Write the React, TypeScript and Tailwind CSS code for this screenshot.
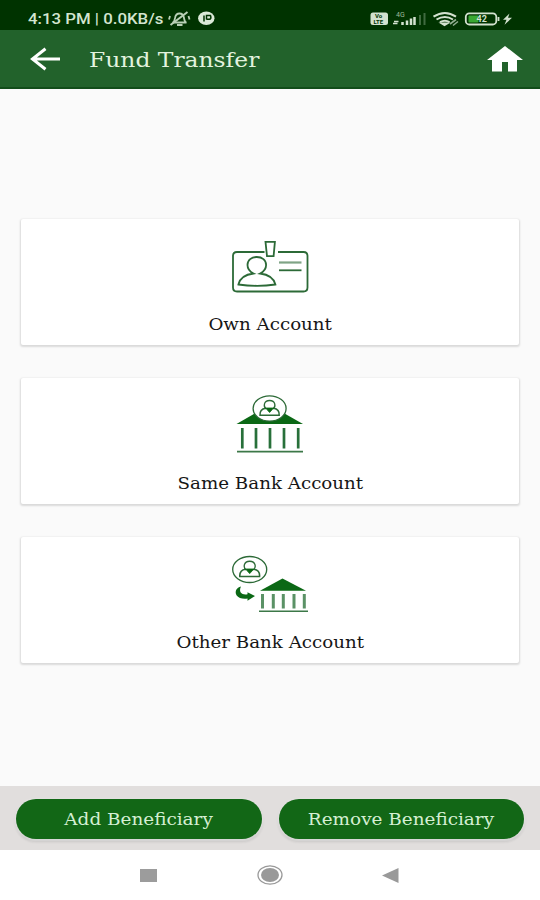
import type { ReactNode } from "react";

const serif = "font-['DejaVu_Serif',serif]";

function OwnAccountIcon() {
  return (
    <svg viewBox="230 236 80 60" className="h-[60px] w-20" fill="none" stroke="#2c6a37" strokeWidth="1.8">
      <path d="M264.500 252H237q-4 0-4 4v31.500q0 4 4 4h66.500q4 0 4-4V256q0-4-4-4H278" />
      <path d="M265.500 241.800h9.400l-1.300 14.400h-6.600z" />
      <path d="M253.500 273.500c-4-2-6-5-6-8.500 0-5 4-8 9.300-8s9.300 3 9.300 8c0 3.500-2 6.500-6 8.500 8 1 13.500 4 15.300 11q-18 2.600-37 0c1.500-6.500 7-10 15.100-11z" />
      <path d="M279 262.500h22.500" stroke="#7fa486" strokeWidth="2.200" />
      <path d="M279 270.300h22.500" />
    </svg>
  );
}

function Person() {
  return (
    <g fill="none" stroke="#2c6a37" strokeWidth="1.300">
      <ellipse cx="0" cy="0" rx="16.500" ry="12.600" fill="#fff" />
      <path d="M-3.500 .5C-6.500-2-6-8 0-8s6.500 6 3.500 8.500" />
      <path d="M-4-.3Q-10 .5-9.600 6.700H9.600Q10 .5 4-.3" strokeWidth="1.500" />
      <path d="M-4-.5h8L0 4z" fill="#0b6815" stroke="#0b6815" strokeWidth=".8" />
    </g>
  );
}

function SameBankIcon() {
  return (
    <svg viewBox="230 395 80 60" className="h-[60px] w-20">
      <path d="M236.500 424 269.500 405l33.500 19z" fill="#0b6815" />
      <path d="M242.300 428v20.500M256 428v20.500M270 428v20.500M284 428v20.500M298.200 428v20.500" stroke="#28703a" strokeWidth="2.700" />
      <path d="M237 451.600h66" stroke="#3c7848" strokeWidth="1.800" />
      <g transform="translate(269.600 408.500)">
        <Person />
      </g>
    </svg>
  );
}

function OtherBankIcon() {
  return (
    <svg viewBox="230 554 80 60" className="h-[60px] w-20">
      <g transform="translate(249.700 569.500) scale(1.03)">
        <Person />
      </g>
      <path d="M241 586.500c-4.500 1-6.500 5-4.500 8.700 2 3.200 7 4 11 3.300v2.200l7.500-4.700-7.500-3.800v2c-5 1-9.500-1.500-6.500-7.700z" fill="#0b6815" />
      <path d="M260 590.800 282.500 578.500l23.500 12.300z" fill="#0b6815" />
      <path d="M262.500 594v14.500M273.300 594v14.500M283.300 594v14.500M294 594v14.500M304.300 594v14.500" stroke="#5b9266" strokeWidth="3" />
      <path d="M259 611.300h49" stroke="#3c7848" strokeWidth="1.500" />
    </svg>
  );
}

function AccountCard({ icon, label }: { icon: ReactNode; label: string }) {
  return (
    <button
      type="button"
      className="flex h-[126px] w-full flex-col items-center rounded-[2px] bg-white pt-[17px] shadow-[0_1px_2px_1px_rgba(0,0,0,0.13)]"
    >
      {icon}
      <span className={`mt-[19px] scale-x-[1.14] text-[16px] leading-5 whitespace-nowrap text-[#161616] ${serif}`}>{label}</span>
    </button>
  );
}

function ActionButton({ label }: { label: string }) {
  return (
    <button
      type="button"
      className="flex h-10 flex-1 items-center justify-center rounded-full bg-[#126716] pt-px shadow-[0_1px_2px_1px_rgba(255,255,255,0.6),0_2px_3px_rgba(0,0,0,0.3)]"
    >
      <span className={`scale-x-[1.15] text-[16px] leading-5 whitespace-nowrap text-[#d5efd3] ${serif}`}>{label}</span>
    </button>
  );
}

function StatusBar() {
  return (
    <div className="flex h-[30px] items-center bg-[#003300] pt-[7px] pl-7">
      <span className="w-[140px] origin-left scale-x-[1.2] font-['Roboto',sans-serif] text-[14px] leading-5 font-medium whitespace-nowrap text-[#d3e5d0]">
        4:13 PM | 0.0KB/s
      </span>
      <svg viewBox="168 10 50 18" className="h-[18px] w-[50px]" fill="none" stroke="#b9d0b6" strokeWidth="1.800">
        <path d="M172.500 22.500c2-.5 2-2.500 2.500-4.500.5-3 2.500-4.500 4.500-4.500s4 1.500 4.500 4.500 .5 4 2.500 4.500zM177 25h5.500M169 19.500l1-3.500M188.500 16l1 3.500" />
        <path d="M170.500 25 187.500 12" strokeWidth="2" />
        <ellipse cx="206.300" cy="18.300" rx="8.200" ry="6.800" fill="#dbead8" stroke="none" />
        <path d="M204 21.500v-6M206.500 19.500v-4h4q1 2.500-.500 3.800h-3.500" stroke="#003300" strokeWidth="1.500" />
      </svg>
      <svg viewBox="368 10 146 18" className="ml-[150px] h-[18px] w-[146px]">
        <rect x="370.500" y="12.500" width="17.500" height="12.500" rx="2.500" fill="#d3e2cf" />
        <g className="font-['Roboto',sans-serif] text-[6px] font-bold" fill="#003300">
          <text x="375" y="18.300">Vo</text>
          <text x="373.500" y="24">LTE</text>
        </g>
        <text x="396" y="17" className="font-['Roboto',sans-serif] text-[7px]" fill="#9fba9c">4G</text>
        <path d="M394 21.500h4.500M393 23.500h4.500" stroke="#d3e2cf" strokeWidth="1.500" />
        <path d="M402.500 25v-3M407 25v-4.500M411 25v-6.500M414.500 25v-8" stroke="#d3e2cf" strokeWidth="2.500" />
        <path d="M420 25V15M424.500 25V13" stroke="#406b40" strokeWidth="2" />
        <g fill="none" stroke="#d3e2cf" strokeWidth="2">
          <path d="M433.500 16.700q11.500-7.500 22.500 0M436.500 19.500q8.500-5 16.500 0M440 22.200q5-3 9.500 0" />
          <path d="M442 23.500h5l-2.500 1.500z" />
          <path d="M450 24l6-4.500M453 25.500l5-4" stroke="#91ad90" strokeWidth="1.600" />
        </g>
        <rect x="465.800" y="13.300" width="30.500" height="11.200" rx="3.500" fill="none" stroke="#d3e2cf" strokeWidth="1.800" />
        <rect x="468.500" y="15.500" width="10" height="7" rx="1" fill="#39a832" />
        <path d="M498.500 17v4" stroke="#d3e2cf" strokeWidth="1.800" />
        <text x="476.500" y="22.300" className="font-['Roboto',sans-serif] text-[9px] font-bold" fill="#d3e2cf">42</text>
        <path d="M509.500 13.500 503 19.800h3.500l-2 5 7.500-7h-4z" fill="#d3e2cf" />
      </svg>
    </div>
  );
}

export default function App() {
  return (
    <div className="flex h-[900px] w-[540px] flex-col overflow-hidden bg-[#fafafa]">
      <StatusBar />
      <header className="flex h-[59px] items-center border-b-2 border-[#124d1a] bg-[#22622b] pr-[17px] pl-[30px]">
        <svg viewBox="0 0 31 24" className="h-6 w-[31px]" fill="none" stroke="#fff" strokeWidth="3">
          <path d="M30 12H2M15.500 1.800 2.500 12l13 10.200" />
        </svg>
        <h1 className={`mt-[3px] ml-7 w-[200px] origin-left scale-x-[1.17] text-[20px] leading-7 whitespace-nowrap text-[#e3f3df] ${serif}`}>
          Fund Transfer
        </h1>
        <svg viewBox="0 0 36 26" className="ml-auto h-[26px] w-9" fill="#fff">
          <path d="M18 0 0 14h5v11.500h10V16h6v9.500h9V14h6z" />
        </svg>
      </header>

      <main className="flex flex-1 flex-col gap-[33px] px-[21px] pt-[130px]">
        <AccountCard icon={<OwnAccountIcon />} label="Own Account" />
        <AccountCard icon={<SameBankIcon />} label="Same Bank Account" />
        <AccountCard icon={<OtherBankIcon />} label="Other Bank Account" />
      </main>

      <footer className="flex h-16 items-center gap-[17px] bg-[#e1dedd] px-4 pt-0.5">
        <ActionButton label="Add Beneficiary" />
        <ActionButton label="Remove Beneficiary" />
      </footer>
      <nav className="flex h-[50px] items-center justify-between bg-white pr-[141px] pl-[140px]">
        <div className="h-[13px] w-[17px] bg-[#9c9c9c]" />
        <svg viewBox="0 0 26 20" className="h-5 w-[26px]">
          <ellipse cx="13" cy="10" rx="12" ry="9.200" fill="none" stroke="#999" strokeWidth="1.300" />
          <ellipse cx="13" cy="10" rx="9" ry="7" fill="#999" />
        </svg>
        <svg viewBox="0 0 17 15" className="h-[15px] w-[17px]" fill="#999">
          <path d="M0 7.500 16.500 0v15z" />
        </svg>
      </nav>
    </div>
  );
}
